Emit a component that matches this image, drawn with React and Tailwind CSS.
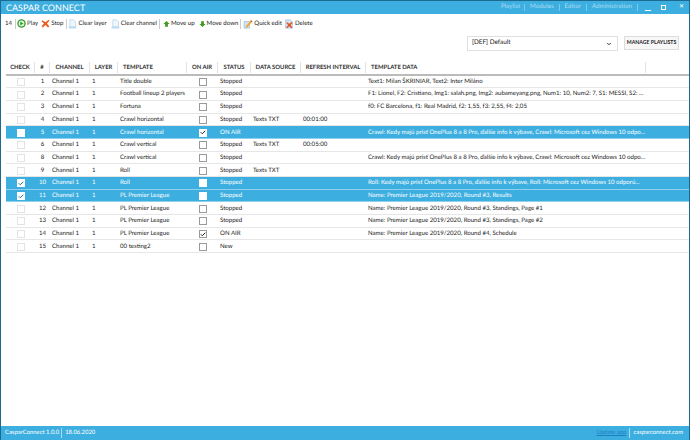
import { Check, ChevronDown } from 'lucide-react'

const gridCols = 'grid grid-cols-[29px_15px_40px_28px_69px_31px_33px_50px_65px_280px_38px]'

const rows = [
  { n: 1, tpl: 'Title double', status: 'Stopped', data: 'Text1: Milan ŠKRINIAR, Text2: Inter Miláno' },
  { n: 2, tpl: 'Football lineup 2 players', status: 'Stopped', data: 'F1: Lionel, F2: Cristiano, Img1: salah.png, Img2: aubameyang.png, Num1: 10, Num2: 7, S1: MESSI, S2: ...' },
  { n: 3, tpl: 'Fortuna', status: 'Stopped', data: 'f0: FC Barcelona, f1: Real Madrid, f2: 1,55, f3: 2,55, f4: 2,05' },
  { n: 4, tpl: 'Crawl horizontal', status: 'Stopped', source: 'Texts TXT', interval: '00:01:00' },
  { n: 5, tpl: 'Crawl horizontal', status: 'ON AIR', onAir: true, selected: true, data: 'Crawl: Kedy majú prísť OnePlus 8 a 8 Pro, ďalšie info k výbave, Crawl: Microsoft cez Windows 10 odpo...' },
  { n: 6, tpl: 'Crawl vertical', status: 'Stopped', source: 'Texts TXT', interval: '00:05:00' },
  { n: 8, tpl: 'Crawl vertical', status: 'Stopped', data: 'Crawl: Kedy majú prísť OnePlus 8 a 8 Pro, ďalšie info k výbave, Crawl: Microsoft cez Windows 10 odpo...' },
  { n: 9, tpl: 'Roll', status: 'Stopped', source: 'Texts TXT' },
  { n: 10, tpl: 'Roll', status: 'Stopped', checked: true, selected: true, data: 'Roll: Kedy majú prísť OnePlus 8 a 8 Pro, ďalšie info k výbave, Roll: Microsoft cez Windows 10 odporú...' },
  { n: 11, tpl: 'PL Premier League', status: 'Stopped', checked: true, selected: true, data: 'Name: Premier League 2019/2020, Round #3, Results' },
  { n: 12, tpl: 'PL Premier League', status: 'Stopped', data: 'Name: Premier League 2019/2020, Round #3, Standings, Page #1' },
  { n: 13, tpl: 'PL Premier League', status: 'Stopped', data: 'Name: Premier League 2019/2020, Round #3, Standings, Page #2' },
  { n: 14, tpl: 'PL Premier League', status: 'ON AIR', onAir: true, data: 'Name: Premier League 2019/2020, Round #4, Schedule' },
  { n: 15, tpl: '00 testing2', status: 'New' },
]

const headers = ['CHECK', '#', 'CHANNEL', 'LAYER', 'TEMPLATE', 'ON AIR', 'STATUS', 'DATA SOURCE', 'REFRESH INTERVAL', 'TEMPLATE DATA', '']

function PlayIcon() {
  return (
    <svg width="9" height="9" viewBox="0 0 10 10">
      <circle cx="5" cy="5" r="4.7" fill="#2f9e2f" />
      <circle cx="5" cy="5" r="3.2" fill="#e8f6e0" />
      <path d="M3.6 2.8 7.2 5 3.6 7.2Z" fill="#2f9e2f" />
    </svg>
  )
}

function StopIcon() {
  return (
    <svg width="9" height="9" viewBox="0 0 10 10">
      <path d="M1.5 1.5 5 3.6 8.5.8 9.4 2 6.6 5 9.3 8.2 7.8 9.4 5 6.6 2 9.4.7 8 3.3 5 .6 2.6Z" fill="#ec5a1c" />
    </svg>
  )
}

function PageIcon() {
  return (
    <svg width="9" height="10" viewBox="0 0 10 11">
      <path d="M2 .8h4l2.4 2.4v6.6H2Z" fill="#eef6fc" stroke="#a9cfe8" strokeWidth=".7" />
      <path d="M.8 8h8.4v2.4H.8Z" fill="#bcdcf2" />
    </svg>
  )
}

function ArrowIcon({ down }) {
  return (
    <svg width="7" height="8" viewBox="0 0 10 10">
      <path d={down ? 'M3 1h4v4h2.4L5 9.4.6 5H3Z' : 'M3 9h4V5h2.4L5 .6.6 5H3Z'} fill="#3f9a1e" />
    </svg>
  )
}

function EditIcon() {
  return (
    <svg width="10" height="10" viewBox="0 0 10 10">
      <path d="M1 2.5h5.5v6.7H1Z" fill="#cfe3f5" stroke="#8db8dc" strokeWidth=".6" />
      <path d="M3 7 8 1.2 9.4 2.4 4.4 8.2 2.6 8.8Z" fill="#f2a72e" />
      <path d="M8 1.2 9.4 2.4 8.6 3.3 7.2 2.1Z" fill="#d9503a" />
    </svg>
  )
}

function DeleteIcon() {
  return (
    <svg width="10" height="10" viewBox="0 0 10 10">
      <path d="M1.5.8h5l2 2v6.4h-7Z" fill="#cfe3f5" stroke="#9dc3e2" strokeWidth=".6" />
      <path d="M3 3.2 5.4 4.8 7.6 3 8.6 4 6.6 6 8.4 8.2 7.2 9.2 5.3 7.2 3.2 9.2 2.2 8.2 4.2 6 2.2 4Z" fill="#e8531f" />
    </svg>
  )
}

function ToolButton({ icon, label }) {
  return (
    <span className="flex items-center gap-[1px]">
      {icon}
      <span className="pt-[1px]">{label}</span>
    </span>
  )
}

function Box({ checked, light, selected }) {
  return (
    <span
      className={`flex h-[8px] w-[8px] items-center justify-center border bg-white ${
        selected ? 'border-white' : light ? 'border-[#e3e3e3]' : 'border-[#9a9a9a]'
      }`}
    >
      {checked && <Check size={7} strokeWidth={4} className={light ? 'text-[#1f6f9c]' : 'text-[#222]'} />}
    </span>
  )
}

function Row({ row }) {
  const tone = row.selected
    ? 'bg-[#3daee0] text-white border-[#8fd0ee]'
    : 'bg-white text-[#222] border-[#e6e6e6]'
  return (
    <div className={`${gridCols} h-[12.7px] items-center border-b pt-[1px] ${tone}`}>
      <span className="flex justify-center">
        <Box checked={row.checked} light selected={row.selected} />
      </span>
      <span className="text-center">{row.n}</span>
      <span className="pl-[2px]">Channel 1</span>
      <span className="pl-[2px]">1</span>
      <span className="whitespace-nowrap pl-[2px]">{row.tpl}</span>
      <span className="flex justify-center">
        <Box checked={row.onAir} selected={row.selected} />
      </span>
      <span className="pl-[2px]">{row.status}</span>
      <span className="pl-[2px]">{row.source}</span>
      <span className="pl-[2px]">{row.interval}</span>
      <span className="whitespace-nowrap pl-[2px]">{row.data}</span>
      <span />
    </div>
  )
}

export default function App() {
  return (
    <div
      className="flex h-[440px] w-[690px] flex-col overflow-hidden border-x border-t border-[#1c6a90] bg-white text-[6.1px] leading-none text-[#222] [text-rendering:geometricPrecision]"
      style={{ fontFamily: 'Lato, "Noto Sans", sans-serif' }}
    >
      {/* Title bar */}
      <div className="flex h-[13px] shrink-0 items-center justify-between bg-[#3daee0] pl-[5px] pr-[5px] text-white">
        <span className="text-[9px]">CASPAR CONNECT</span>
        <div className="flex items-center text-[6.2px] text-[#a9dcf3]">
          <span className="border-r border-[#7cc8ea] pr-[4px]">Playlist</span>
          <span className="border-r border-[#7cc8ea] px-[5px]">Modules</span>
          <span className="border-r border-[#7cc8ea] px-[5px]">Editor</span>
          <span className="border-r border-[#7cc8ea] px-[5px]">Administration</span>
          <span className="ml-[7px] h-[1px] w-[6px] self-end bg-white" />
          <span className="ml-[10px] h-[5px] w-[5px] border border-white" />
          <span className="ml-[13px] text-[6px] text-white">✕</span>
        </div>
      </div>

      {/* Toolbar */}
      <div className="flex h-[19px] shrink-0 items-center pl-[4px]">
        <span className="pt-[1px]">14</span>
        <span className="ml-[3px] mr-[1px] h-[10px] border-l border-[#ccc]" />
        <div className="flex items-center gap-[3px]">
          <ToolButton icon={<PlayIcon />} label="Play" />
          <ToolButton icon={<StopIcon />} label="Stop" />
        </div>
        <span className="ml-[3px] mr-[1px] h-[10px] border-l border-[#ccc]" />
        <div className="flex items-center gap-[4px]">
          <ToolButton icon={<PageIcon />} label="Clear layer" />
          <ToolButton icon={<PageIcon />} label="Clear channel" />
        </div>
        <span className="ml-[2px] mr-[3px] h-[10px] border-l border-[#ccc]" />
        <div className="flex items-center gap-[4px]">
          <ToolButton icon={<ArrowIcon />} label="Move up" />
          <ToolButton icon={<ArrowIcon down />} label="Move down" />
        </div>
        <span className="ml-[2px] mr-[2px] h-[10px] border-l border-[#ccc]" />
        <div className="flex items-center gap-[2px]">
          <ToolButton icon={<EditIcon />} label="Quick edit" />
          <ToolButton icon={<DeleteIcon />} label="Delete" />
        </div>
      </div>

      {/* Playlist picker */}
      <div className="mt-[3px] flex h-[15px] shrink-0 items-start justify-end gap-[6px] pr-[10px]">
        <div className="flex h-[15px] w-[151px] items-center justify-between border border-[#e0e0e0] pl-[4px] pr-[5px]">
          <span className="text-[6.4px]">[DEF] Default</span>
          <ChevronDown size={6} strokeWidth={4} className="text-[#333]" />
        </div>
        <button type="button" className="h-[14px] w-[55px] border border-[#ddd] bg-[#f7f7f7] text-[5.2px] font-bold text-[#222]">
          MANAGE PLAYLISTS
        </button>
      </div>

      {/* Table */}
      <div className="mt-[10.5px] ml-[5px] flex-1">
        <div className={`${gridCols} h-[14px] items-center border-b-2 border-[#bbb] text-[5.9px] font-bold text-[#333]`}>
          {headers.map((h, i) => (
            <span
              key={i}
              className={`flex h-[11px] items-center justify-center whitespace-nowrap ${
                i < 10 ? 'border-r border-[#e2e2e2]' : ''
              } ${i === 9 || i === 4 ? 'justify-start pl-[5px]' : ''}`}
            >
              {h}
            </span>
          ))}
        </div>
        {rows.map((r) => (
          <Row key={r.n} row={r} />
        ))}
      </div>

      {/* Status bar */}
      <div className="flex h-[14px] shrink-0 items-center justify-between bg-[#3daee0] pl-[4px] pr-[6px] text-[5.9px] text-white">
        <div className="flex items-center">
          <span className="border-r border-[#a6dbf3] pr-[2px] leading-[10px]">CasparConnect 1.0.0</span>
          <span className="pl-[3px]">18.06.2020</span>
        </div>
        <div className="flex items-center">
          <span className="border-r border-[#a6dbf3] pr-[3px] leading-[10px] text-[#1c7fc0] underline">Update app</span>
          <span className="pl-[3px]">casparconnect.com</span>
        </div>
      </div>
    </div>
  )
}
